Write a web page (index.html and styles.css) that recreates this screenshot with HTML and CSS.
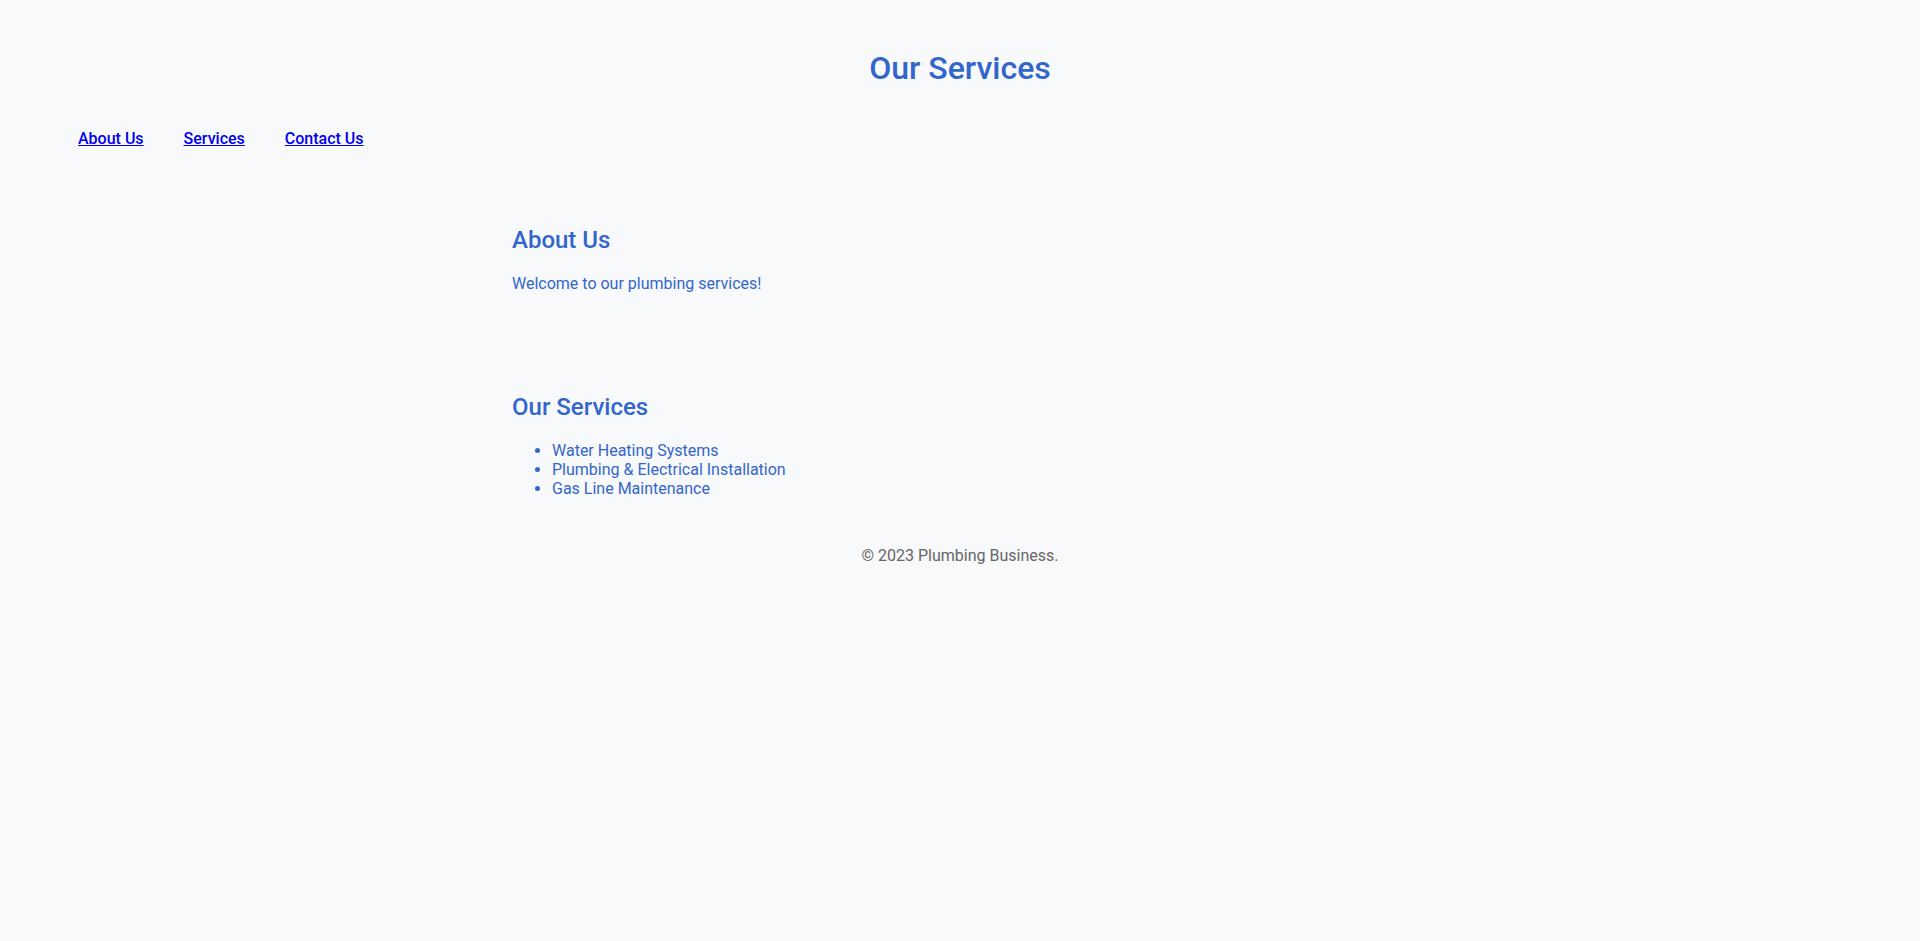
FILE: index.html
```html
<!DOCTYPE html>
<html lang="en">
<head>
<meta charset="utf-8">
<title>Our Services</title>
<link rel="stylesheet" href="styles.css">
</head>
<body>
<header class="site-header">
  <h1 class="site-title">Our Services</h1>
</header>
<nav class="site-nav">
  <ul class="nav-list">
    <li><a class="nav-link" href="#about">About Us</a></li>
    <li><a class="nav-link" href="#services">Services</a></li>
    <li><a class="nav-link" href="#contact">Contact Us</a></li>
  </ul>
</nav>
<main class="content">
  <section class="section" id="about">
    <h2 class="section-title">About Us</h2>
    <p class="section-text">Welcome to our plumbing services!</p>
  </section>
  <section class="section" id="services">
    <h2 class="section-title">Our Services</h2>
    <ul class="service-list">
      <li>Water Heating Systems</li>
      <li>Plumbing &amp; Electrical Installation</li>
      <li>Gas Line Maintenance</li>
    </ul>
  </section>
</main>
<footer class="site-footer" id="contact">
  <p class="footer-text">© 2023 Plumbing Business.</p>
</footer>
</body>
</html>
```
FILE: styles.css
```css
html, body {
  margin: 0;
  padding: 0;
}
body {
  background: #f8f9fa;
  font-family: Roboto, "Liberation Sans", Arial, sans-serif;
  font-size: 16px;
  color: #3366cc;
}
.site-header {
  padding-top: 49px;
  text-align: center;
}
.site-title {
  margin: 0;
  font-size: 32px;
  font-weight: 500;
  line-height: normal;
  color: #3366cc;
}
.site-nav {
  padding: 0 0 0 78px;
  margin-top: 42px;
}
.nav-list {
  list-style: none;
  margin: 0;
  padding: 0;
  display: flex;
  gap: 40px;
}
.nav-link {
  color: #0000ee;
  font-weight: 500;
  text-decoration: underline;
}
.content {
  max-width: 896px;
  margin: 0 auto;
  padding-top: 78px;
}
.section {
  margin: 0;
}
.section + .section {
  margin-top: 100px;
}
.section-title {
  margin: 0 0 20px;
  font-size: 24px;
  font-weight: 500;
  line-height: normal;
  color: #3366cc;
}
.section-text {
  margin: 0;
}
.service-list {
  margin: 0;
  padding-left: 40px;
}
.site-footer {
  margin-top: 48px;
  text-align: center;
}
.footer-text {
  margin: 0;
  color: #666666;
}
```
